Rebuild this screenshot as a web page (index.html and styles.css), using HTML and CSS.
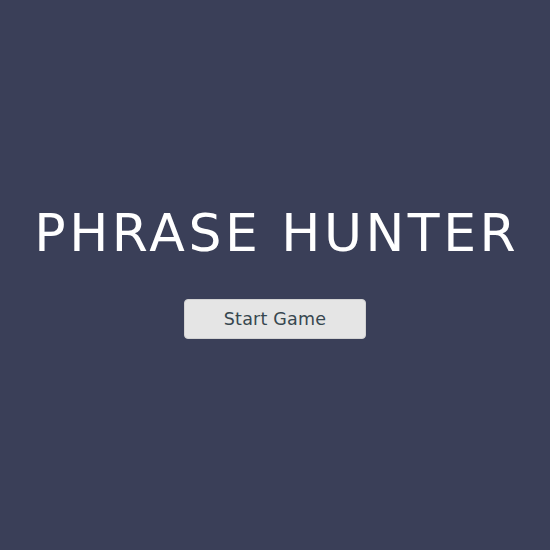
FILE: index.html
```html
<!DOCTYPE html>
<html lang="en">
<head>
<meta charset="utf-8">
<title>Phrase Hunter</title>
<link rel="stylesheet" href="styles.css">
</head>
<body>
<div class="overlay">
  <h2 class="title">PHRASE HUNTER</h2>
  <button class="btn-reset">Start Game</button>
</div>
</body>
</html>
```
FILE: styles.css
```css
html, body {
  margin: 0;
  padding: 0;
  height: 100%;
}
body {
  background: #3a3f58;
  font-family: "DejaVu Sans", "Noto Sans", sans-serif;
}
.overlay {
  height: 100%;
  box-sizing: border-box;
  padding-bottom: 11px;
  display: flex;
  flex-direction: column;
  align-items: center;
  justify-content: center;
}
.title {
  margin: 0 -3.5px 0 0;
  color: #ffffff;
  font-weight: 400;
  font-size: 52px;
  line-height: 64px;
  letter-spacing: 3.5px;
  white-space: nowrap;
}
.btn-reset {
  margin-top: 34px;
  width: 182px;
  height: 40px;
  padding: 1px 0 0;
  background: #e5e5e5;
  color: #37474f;
  border: 1px solid #d2d2d2;
  border-radius: 4px;
  font-family: "DejaVu Sans", sans-serif;
  font-size: 17.5px;
  letter-spacing: 0.2px;
}
```
